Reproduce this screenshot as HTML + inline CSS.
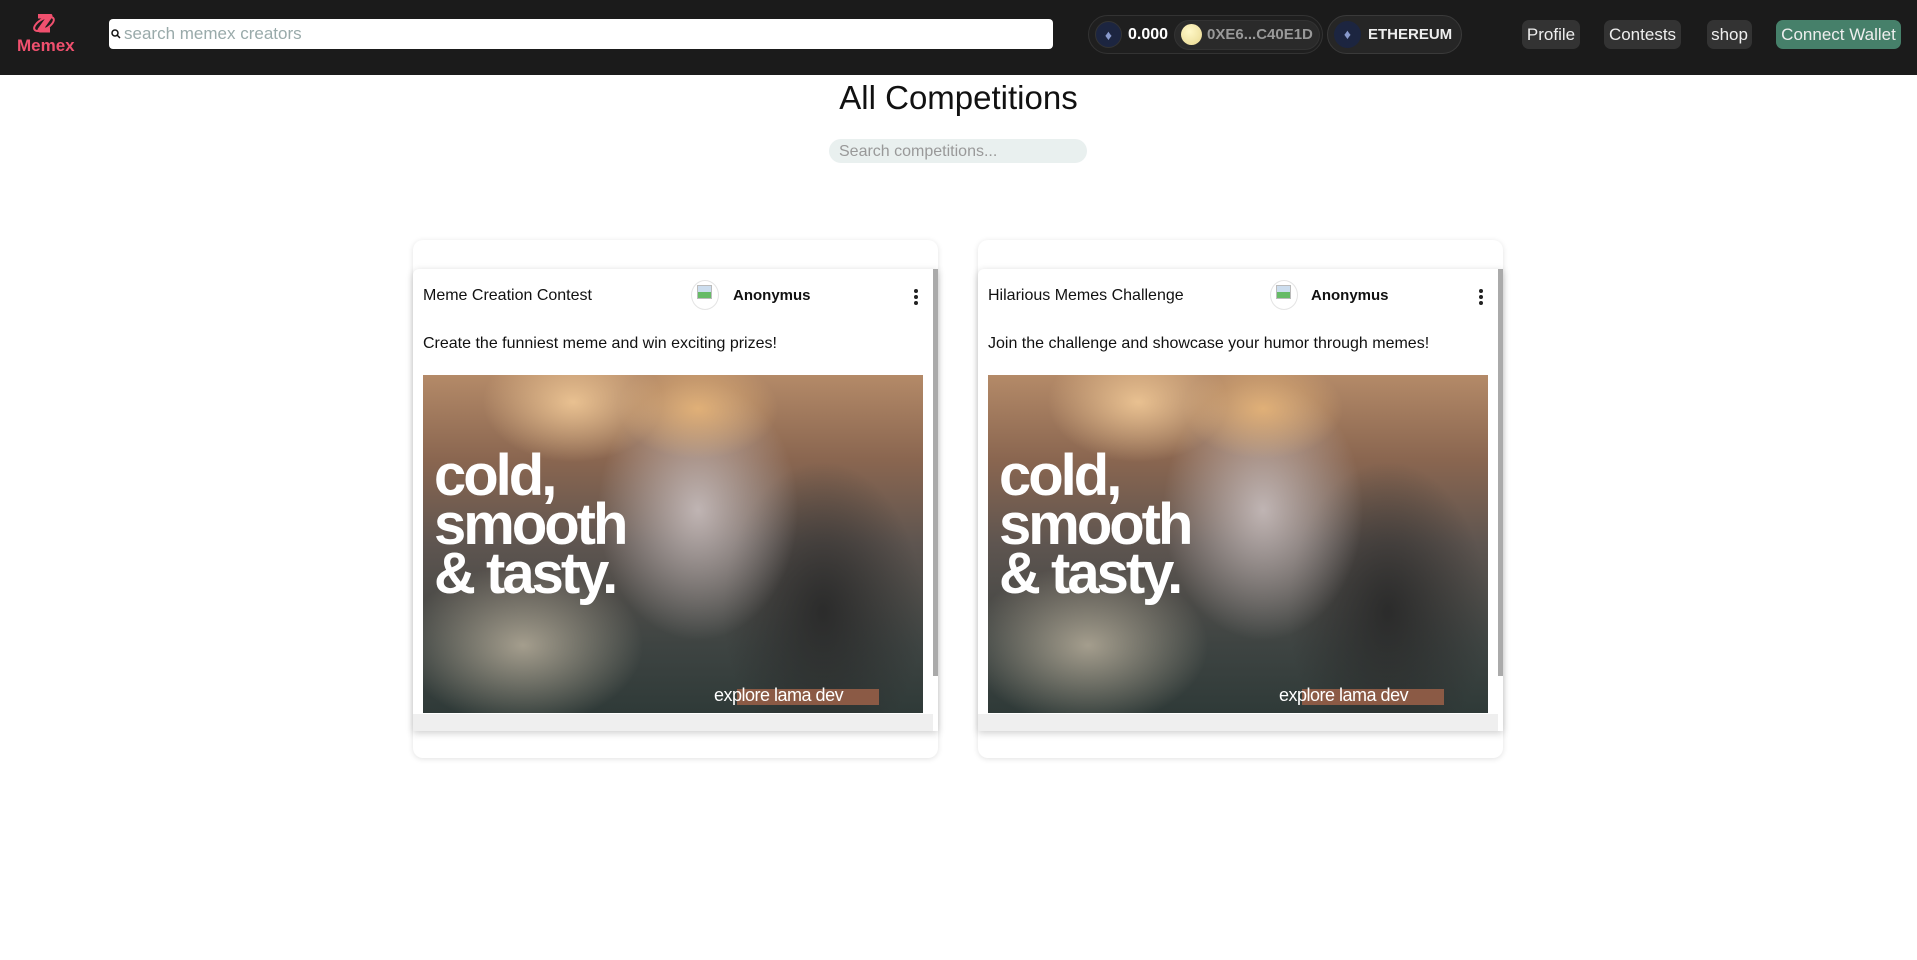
<!DOCTYPE html>
<html><head><meta charset="utf-8"><style>
*{box-sizing:border-box;margin:0;padding:0}
body{width:1917px;height:960px;background:#fff;font-family:"Liberation Sans",sans-serif;position:relative;overflow:hidden}
.hdr{position:absolute;left:0;top:0;width:1917px;height:75px;background:#1b1b1b}
.abs{position:absolute}
.btn{position:absolute;top:20px;height:29px;background:#333;border-radius:7px;color:#eee;font-size:17px;line-height:29px;text-align:center}
.card{position:absolute;top:240px;width:525px;height:518px;border-radius:10px;box-shadow:0 1px 6px rgba(0,0,0,.12);background:#fff}
.inner{position:absolute;left:0;top:29px;width:525px;height:462px;background:#fff;box-shadow:0 2px 8px rgba(0,0,0,.2);border-radius:6px 0 0 0}
.sb{position:absolute;right:0;top:0;width:5px;height:407px;background:#aaa}
.hb{position:absolute;left:0;bottom:0;width:520px;height:17px;background:#efefef}
.ttl{position:absolute;left:10px;top:18px;font-size:16px;color:#111}
.av{position:absolute;top:11px;width:28px;height:30px;border-radius:50%;border:1px solid #e4e4e4;background:#fff}
.av:after{content:"";position:absolute;left:5px;top:4px;width:13px;height:12px;background:linear-gradient(#cde 0,#cde 50%,#6b6 50%);border:1px solid #bbb}
.an{position:absolute;top:18px;font-size:15px;font-weight:bold;color:#111}
.dots{position:absolute;right:20px;top:20px;width:4px}
.dots i{display:block;width:4px;height:4px;border-radius:50%;background:#222;margin-bottom:2px}
.desc{position:absolute;left:10px;top:66px;font-size:16px;color:#111}
.img{position:absolute;left:10px;top:106px;width:500px;height:338px;overflow:hidden;
background:
radial-gradient(ellipse 90px 60px at 30% 8%,rgba(240,200,150,.9),transparent),
radial-gradient(ellipse 80px 50px at 55% 10%,rgba(230,180,120,.9),transparent),
radial-gradient(ellipse 100px 130px at 55% 40%,rgba(200,190,190,.9),transparent),
radial-gradient(ellipse 100px 150px at 80% 70%,rgba(40,40,40,.9),transparent),
radial-gradient(ellipse 120px 80px at 20% 80%,rgba(190,180,160,.8),transparent),
linear-gradient(180deg,#b48a68 0%,#8a6650 25%,#5e5550 50%,#3e4442 80%,#2f3a38 100%)}
.big{position:absolute;left:11px;top:76px;color:#fff;font-weight:bold;font-size:58px;line-height:49px;letter-spacing:-3px}
.exp{position:absolute;left:291px;top:310px;color:#fff;font-size:18px;letter-spacing:-.5px}
.expb{position:absolute;left:314px;top:314px;width:142px;height:16px;background:#8b5a45}
</style></head><body>
<div class="hdr"></div>
<svg class="abs" style="left:32px;top:14px" width="24" height="22" viewBox="0 0 24 22"><path d="M6 2h12l-10 14h10" stroke="#f0506e" stroke-width="5" fill="none" stroke-linejoin="round"/><ellipse cx="12" cy="10" rx="11" ry="5" transform="rotate(-30 12 10)" stroke="#f0506e" stroke-width="2" fill="none"/></svg>
<div class="abs" style="left:17px;top:36px;color:#f0506e;font-weight:bold;font-size:17px">Memex</div>
<div class="abs" style="left:109px;top:19px;width:944px;height:30px;background:#fff;border-radius:4px"></div>
<svg class="abs" style="left:111px;top:29px" width="10" height="10" viewBox="0 0 10 10"><circle cx="4" cy="4" r="3" stroke="#111" stroke-width="1.5" fill="none"/><path d="M6 6l3 3" stroke="#111" stroke-width="1.5"/></svg>
<div class="abs" style="left:124px;top:24px;color:#9aa;font-size:17px">search memex creators</div>
<div class="abs" style="left:1088px;top:15px;width:235px;height:39px;border-radius:20px;background:#1f1f1f;border:1px solid #333"></div>
<div class="abs" style="left:1095px;top:21px;width:27px;height:27px;border-radius:50%;background:#1c2540;border:1px solid #333;color:#8899cc;font-size:14px;text-align:center;line-height:26px">♦</div>
<div class="abs" style="left:1128px;top:26px;color:#fff;font-weight:bold;font-size:16px">0.000</div>
<div class="abs" style="left:1174px;top:20px;width:146px;height:30px;border-radius:15px;background:#2a2a2a;border:1px solid #333"></div>
<div class="abs" style="left:1181px;top:24px;width:21px;height:21px;border-radius:50%;background:radial-gradient(circle at 40% 35%,#fff8c8,#e8d890)"></div>
<div class="abs" style="left:1207px;top:26px;color:#999;font-weight:bold;font-size:15px">0XE6...C40E1D</div>
<div class="abs" style="left:1327px;top:15px;width:135px;height:39px;border-radius:20px;background:#262626;border:1px solid #3a3a3a"></div>
<div class="abs" style="left:1334px;top:21px;width:27px;height:27px;border-radius:50%;background:#1c2540;color:#8899cc;font-size:14px;text-align:center;line-height:27px">♦</div>
<div class="abs" style="left:1368px;top:26px;color:#eee;font-weight:bold;font-size:15px">ETHEREUM</div>
<div class="btn" style="left:1522px;width:58px">Profile</div>
<div class="btn" style="left:1604px;width:77px">Contests</div>
<div class="btn" style="left:1707px;width:45px">shop</div>
<div class="btn" style="left:1776px;width:125px;background:#46806a">Connect Wallet</div>
<div class="abs" style="left:0;width:1917px;top:79px;text-align:center;font-size:33px;color:#111">All Competitions</div>
<div class="abs" style="left:829px;top:139px;width:258px;height:24px;border-radius:12px;background:#e9f0ef;color:#999;font-size:16px;line-height:25px;padding-left:10px">Search competitions...</div>

<div class="card" style="left:413px">
<div class="inner">
<div class="ttl">Meme Creation Contest</div>
<div class="av" style="left:278px"></div>
<div class="an" style="left:320px">Anonymus</div>
<div class="dots"><i></i><i></i><i></i></div>
<div class="desc">Create the funniest meme and win exciting prizes!</div>
<div class="img"><div class="big">cold,<br>smooth<br>&amp; tasty.</div><div class="expb"></div><div class="exp">explore lama dev</div></div>
<div class="hb"></div>
<div class="sb"></div>
</div></div>

<div class="card" style="left:978px">
<div class="inner">
<div class="ttl">Hilarious Memes Challenge</div>
<div class="av" style="left:292px"></div>
<div class="an" style="left:333px">Anonymus</div>
<div class="dots"><i></i><i></i><i></i></div>
<div class="desc">Join the challenge and showcase your humor through memes!</div>
<div class="img"><div class="big">cold,<br>smooth<br>&amp; tasty.</div><div class="expb"></div><div class="exp">explore lama dev</div></div>
<div class="hb"></div>
<div class="sb"></div>
</div></div>
</body></html>
